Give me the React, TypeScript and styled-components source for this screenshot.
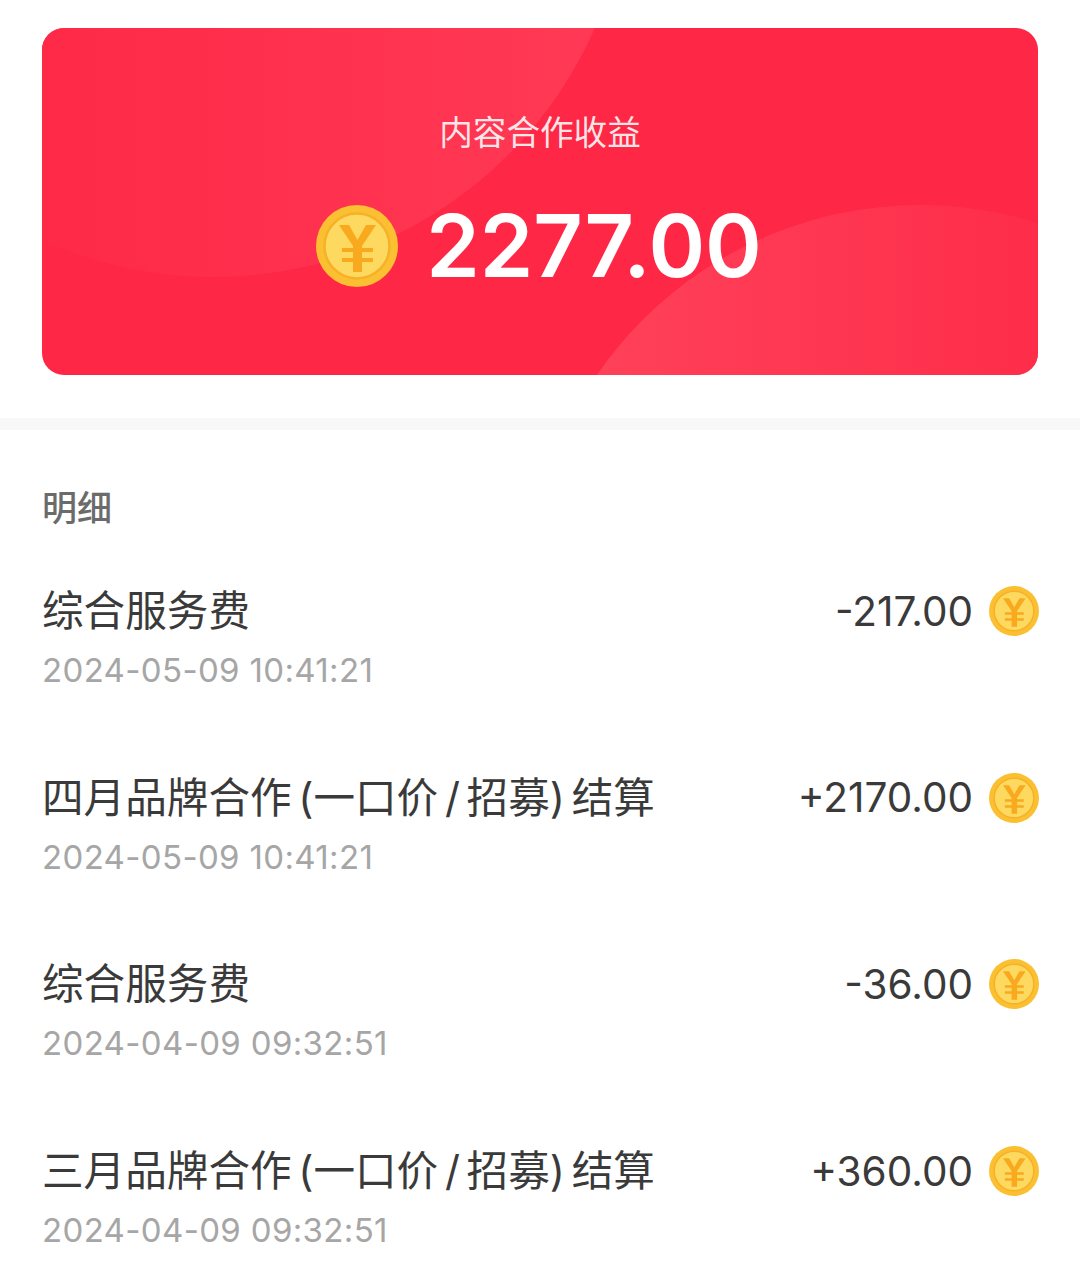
import styled, { createGlobalStyle } from "styled-components";

const GlobalStyle = createGlobalStyle`
  html, body {
    margin: 0;
    padding: 0;
    background: #fff;
  }
  body {
    font-family: Inter, "Noto Sans CJK SC", sans-serif;
  }
`;

// ------ data ------
const records = [
  { title: "综合服务费", time: "2024-05-09 10:41:21", amount: "-217.00" },
  { title: "四月品牌合作 (一口价 / 招募) 结算", time: "2024-05-09 10:41:21", amount: "+2170.00" },
  { title: "综合服务费", time: "2024-04-09 09:32:51", amount: "-36.00" },
  { title: "三月品牌合作 (一口价 / 招募) 结算", time: "2024-04-09 09:32:51", amount: "+360.00" },
];

const Coin = ({ size }: { size: number }) => (
  <CoinIcon width={size} height={size} viewBox="0 0 82 82">
    <circle cx="41" cy="41" r="41" fill="#fbc031" />
    <circle cx="41" cy="41" r="32.5" fill="#fdd95f" stroke="#f7b128" strokeWidth="2.5" />
    <path
      fill="#f8a91e"
      d="M23 20 H33 L41.5 35 L50 20 H60 L46 41 V67 H37 V41 Z"
    />
    <path fill="#f8a91e" d="M26 43 H57 V47 H26 Z M26 53 H57 V57 H26 Z" />
  </CoinIcon>
);

const App = () => {
  return (
    <Page>
      <GlobalStyle />
      <Card>
        <Blob $side="top" />
        <Blob $side="bottom" />
        <CardLabel>内容合作收益</CardLabel>
        <Balance>
          <Coin size={82} />
          <BalanceValue>2277.00</BalanceValue>
        </Balance>
      </Card>
      <Divider />
      <Details>
        <DetailsHeading>明细</DetailsHeading>
        {records.map((item, ind) => (
          <Row key={ind}>
            <RowText>
              <RowTitle>{item.title}</RowTitle>
              <RowTime>{item.time}</RowTime>
            </RowText>
            <RowAmount>
              <span>{item.amount}</span>
              <Coin size={50} />
            </RowAmount>
          </Row>
        ))}
      </Details>
    </Page>
  );
};

export default App;

// ------ component styles ------
const Page = styled.div`
  width: 1080px;
  height: 1266px;
  overflow: hidden;
  background: #fff;
`;

const Card = styled.section`
  position: relative;
  overflow: hidden;
  box-sizing: border-box;
  height: 347px;
  margin: 28px 42px 43px;
  padding-top: 82px;
  border-radius: 22px;
  background: #fe2745;
  display: flex;
  flex-direction: column;
  align-items: center;
`;

const Blob = styled.div<{ $side: "top" | "bottom" }>`
  position: absolute;
  border-radius: 50%;
  ${(p) =>
    p.$side === "top"
      ? `width: 833px; height: 833px; left: -245px; top: -584px; background: linear-gradient(90deg, #fe2947 28%, #ff3955 95%);`
      : `width: 784px; height: 784px; left: 486px; top: 177px; background: linear-gradient(90deg, #ff4059 10%, #fe2c49 68%);`}
`;

const CardLabel = styled.div`
  position: relative;
  font-size: 33.6px;
  line-height: 46px;
  color: rgba(255, 255, 255, 0.88);
`;

const Balance = styled.div`
  position: relative;
  display: flex;
  align-items: center;
  gap: 28px;
  margin: 49px 2px 0 0;
`;

const BalanceValue = styled.div`
  font-size: 86px;
  line-height: 82px;
  font-weight: 600;
  color: #fff;
`;

const CoinIcon = styled.svg`
  display: block;
  flex-shrink: 0;
`;

const Divider = styled.div`
  height: 12px;
  background: #f8f8f8;
`;

const Details = styled.section`
  padding: 58px 41px 0 42px;
`;

const DetailsHeading = styled.h2`
  margin: 0 0 55px;
  font-size: 35px;
  line-height: 40px;
  font-weight: 500;
  color: #6b6b6b;
`;

const Row = styled.div`
  display: flex;
  justify-content: space-between;
  height: 186.7px;
`;

const RowText = styled.div`
  display: flex;
  flex-direction: column;
  gap: 9px;
`;

const RowTitle = styled.div`
  font-size: 41.6px;
  line-height: 56px;
  word-spacing: -5px;
  color: #3a3a3a;
`;

const RowTime = styled.div`
  font-size: 33px;
  line-height: 44px;
  letter-spacing: 0.35px;
  color: #a6a6a6;
`;

const RowAmount = styled.div`
  display: flex;
  align-items: center;
  gap: 16px;
  height: 56px;
  font-size: 40.5px;
  color: #3a3a3a;
`;
